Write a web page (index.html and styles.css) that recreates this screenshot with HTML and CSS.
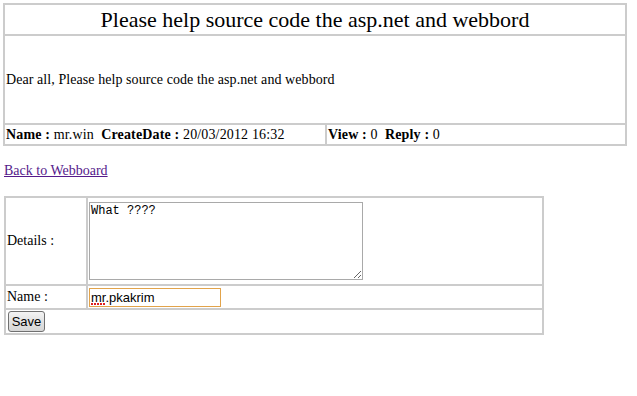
FILE: index.html
```html
<!DOCTYPE html>
<html lang="en">
<head>
        <meta charset="UTF-8">
        <title>Webboard - View Topic</title>
        <link rel="stylesheet" href="styles.css">
</head>
<body>
        <table class="topic">
                <tr>
                        <td colspan="2" class="topic-title">Please help source code the asp.net and webbord</td>
                </tr>
                <tr>
                        <td colspan="2" class="topic-body">Dear all, Please help source code the asp.net and webbord</td>
                </tr>
                <tr>
                        <td class="topic-meta meta-left"><b>Name :</b> mr.win&nbsp; <b>CreateDate :</b> 20/03/2012 16:32</td>
                        <td class="topic-meta"><b>View :</b> 0&nbsp; <b>Reply :</b> 0</td>
                </tr>
        </table>

        <p class="back"><a href="#">Back to Webboard</a></p>

        <table class="reply">
                <tr>
                        <td class="label">Details :</td>
                        <td class="field"><textarea class="details">What ????</textarea></td>
                </tr>
                <tr>
                        <td class="label">Name :</td>
                        <td class="field"><span class="name-wrap"><input class="name" type="text" value="mr.pkakrim"><span class="spell"></span></span></td>
                </tr>
                <tr>
                        <td colspan="2" class="actions"><button class="save" type="button">Save</button></td>
                </tr>
        </table>
</body>
</html>
```

FILE: styles.css
```css
body {
        margin: 0;
        font-family: "Liberation Serif", "Times New Roman", serif;
        font-size: 14px;
        color: #000;
        background: #fff;
}

table {
        border: 1px solid #cccccc;
        border-collapse: separate;
        border-spacing: 0;
}

td {
        border: 1px solid #cccccc;
        padding: 1px;
}

.topic {
        width: 624px;
        margin: 3px 0 0 3px;
}

.topic-title {
        font-size: 22px;
        line-height: 27px;
        text-align: center;
}

.topic-body {
        height: 85px;
        line-height: 16px;
        letter-spacing: 0.07px;
}

.topic-meta {
        line-height: 17px;
        letter-spacing: 0.15px;
}

.meta-left {
        width: 318px;
}

.back {
        margin: 17px 0 0 4px;
        font-size: 14px;
        line-height: 16px;
}

.back a {
        color: #551a8b;
}

.reply {
        width: 540px;
        margin: 17px 0 0 4px;
}

.label {
        width: 78px;
        line-height: 16px;
}

.details {
        display: block;
        box-sizing: border-box;
        width: 274px;
        height: 78px;
        margin: 3px 0;
        padding: 1px;
        border: 1px solid #a9a9a9;
        font-family: "Liberation Mono", "Courier New", monospace;
        font-size: 12px;
        line-height: 14px;
}

.name-wrap {
        position: relative;
        display: inline-block;
        vertical-align: top;
}

.name {
        display: block;
        box-sizing: border-box;
        width: 132px;
        height: 19px;
        margin: 1px 0 0 0;
        padding: 0 1px;
        border: 1px solid #e2a34a;
        outline: none;
        font-family: "Liberation Sans", Arial, sans-serif;
        font-size: 13px;
}

.spell {
        position: absolute;
        left: 2px;
        top: 15px;
        width: 15px;
        height: 3px;
        background: radial-gradient(circle at 1px 2px, #e02020 0.8px, transparent 1.2px) 0 0 / 3px 3px repeat-x;
}

.actions {
        padding: 1px 2px;
}

.save {
        display: block;
        box-sizing: border-box;
        width: 37px;
        height: 21px;
        padding: 0;
        border: 1px solid #707070;
        border-radius: 3px;
        background: linear-gradient(#f4f4f4, #e2e2e2 50%, #d6d6d6);
        font-family: "Liberation Sans", Arial, sans-serif;
        font-size: 13px;
        color: #000;
}
```
